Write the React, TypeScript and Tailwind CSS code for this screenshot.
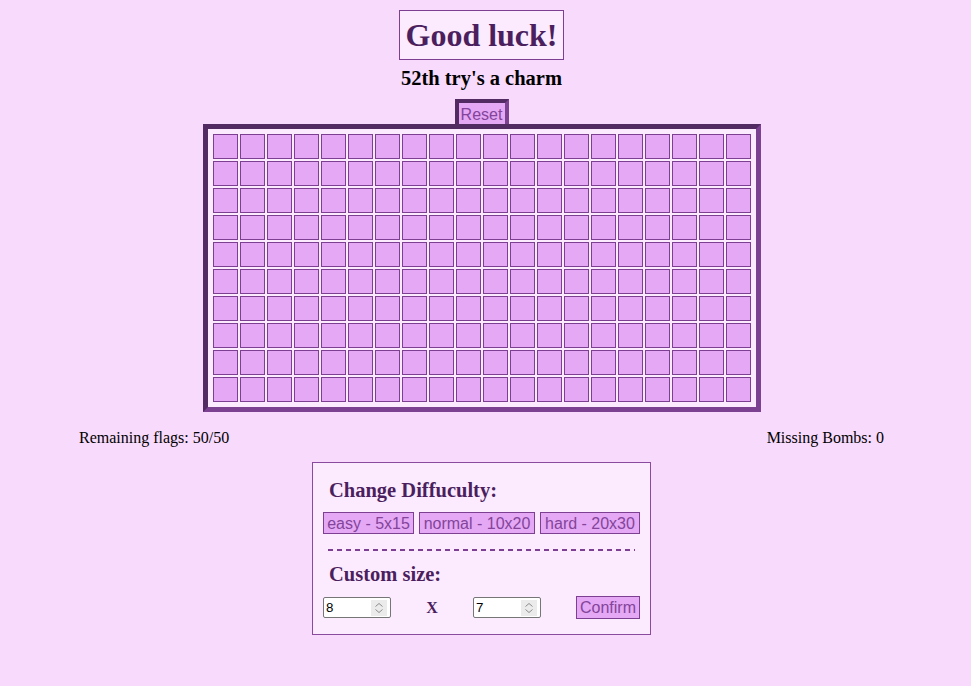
import React from 'react';

const ROWS = 10;
const COLS = 20;

function NumberBox({ value }: { value: string }) {
  return (
    <div className="flex h-[21px] w-[68px] items-center rounded-[2px] border border-[#767676] bg-white pl-[2px] pr-[3px]">
      <input
        type="text"
        defaultValue={value}
        className="w-0 flex-1 bg-transparent text-[13.33px] text-black outline-none [font-family:'Liberation_Sans',Arial,sans-serif]"
      />
      <div className="flex h-[16px] w-[16px] items-center justify-center bg-[#ebebeb]">
        <svg width="16" height="16" viewBox="0 0 16 16" fill="none" stroke="#8c8c8c" strokeWidth="1">
          <path d="M4.5 6.5 L8 3.5 L11.5 6.5" />
          <path d="M4.5 9.5 L8 12.5 L11.5 9.5" />
        </svg>
      </div>
    </div>
  );
}

function PurpleButton({ label, width }: { label: string; width: string }) {
  return (
    <button
      type="button"
      className={`flex h-[22px] items-center justify-center border border-[#7d3f92] bg-[#e5a8f5] pt-[1px] text-[16px] leading-[18px] text-[#83449a] [font-family:'Liberation_Sans',Arial,sans-serif] ${width}`}
    >
      {label}
    </button>
  );
}

export default function App() {
  const cells = Array.from({ length: ROWS * COLS }, (_, i) => i);

  return (
    <div className="min-h-screen w-full bg-[#f8dafc] pr-[8px] pt-[10px] [font-family:'Liberation_Serif','Times_New_Roman',serif]">
      <div className="flex flex-col items-center">
        <div className="border border-[#7d3f92] bg-[#fcebfe] px-[5px] py-[6px]">
          <h1 className="text-[32px] font-bold leading-[36px] text-[#4b1f5e]">Good luck!</h1>
        </div>
        <h3 className="mt-[7px] text-[20.5px] font-bold leading-[23px] text-black">52th try's a charm</h3>

        <button
          type="button"
          className="mt-[9px] h-[25px] w-[54px] border-l-4 border-r-4 border-t-4 border-l-[#532b63] border-r-[#7c4191] border-t-[#532b63] bg-[#e5a8f5] pt-[1px] text-[16px] leading-[21px] text-[#83449a] [font-family:'Liberation_Sans',Arial,sans-serif]"
        >
          Reset
        </button>

        {/* board */}
        <div className="border-[5px] border-b-[#7c4191] border-l-[#532b63] border-r-[#7c4191] border-t-[#532b63] bg-[#fcebfe] p-[4px]">
          <div className="grid grid-cols-[repeat(20,27px)]">
            {cells.map((c) => (
              <div key={c} className="m-[1px] h-[25px] w-[25px] border border-[#7d3f92] bg-[#e5a8f5]" />
            ))}
          </div>
        </div>

        <div className="mt-[17px] flex w-full justify-between px-[79px] text-[16px] leading-[18px] text-black">
          <span>Remaining flags: 50/50</span>
          <span>Missing Bombs: 0</span>
        </div>

        {/* difficulty panel */}
        <div className="mt-[15px] w-[339px] border border-[#8a4a9e] bg-[#fcebfe] px-[10px] pb-[15px]">
          <h3 className="ml-[6px] mt-[16px] text-[20.5px] font-bold leading-[23px] text-[#4b1f5e]">Change Diffuculty:</h3>
          <div className="mt-[10px] flex gap-[5px]">
            <PurpleButton label="easy - 5x15" width="w-[91px]" />
            <PurpleButton label="normal - 10x20" width="w-[116px]" />
            <PurpleButton label="hard - 20x30" width="w-[100px]" />
          </div>
          <div className="mx-[5px] mt-[15px] h-[2px] bg-[repeating-linear-gradient(90deg,#7d3f92_0_5px,transparent_5px_9px)]" />
          <h3 className="ml-[6px] mt-[12px] text-[20.5px] font-bold leading-[23px] text-[#4b1f5e]">Custom size:</h3>
          <div className="mt-[10px] flex h-[23px] items-center gap-[35px]">
            <NumberBox value="8" />
            <span className="w-[12px] text-center text-[16px] font-bold leading-[18px] text-[#4b1f5e]">X</span>
            <NumberBox value="7" />
            <button
              type="button"
              className="flex h-[23px] w-[64px] items-center justify-center border border-[#7d3f92] bg-[#e5a8f5] pt-[1px] text-[16px] leading-[18px] text-[#83449a] [font-family:'Liberation_Sans',Arial,sans-serif]"
            >
              Confirm
            </button>
          </div>
        </div>
      </div>
    </div>
  );
}
